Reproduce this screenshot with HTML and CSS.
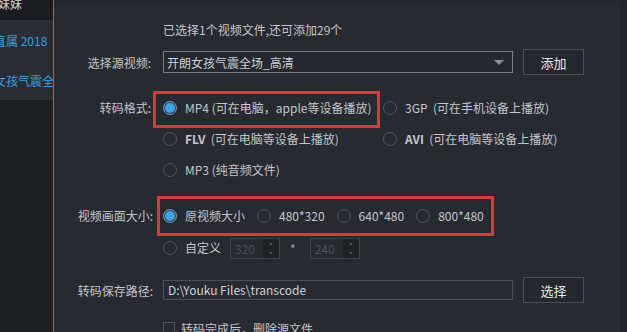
FILE: index.html
```html
<!DOCTYPE html>
<html lang="zh-CN">
  <head>
    <meta charset="UTF-8" />
    <title>视频转码</title>
    <meta name="viewport" content="width=device-width, initial-scale=1.0" />
    <link rel="stylesheet" href="styles.css">
  </head>
  <body>
    <aside class="sidebar">
      <div class="side-head">可爱小妹妹</div>
      <div class="side-item">
        <div class="side-line">官方直属 2018</div>
        <div class="side-line">开朗女孩气震全场_高清</div>
      </div>
    </aside>

    <main class="panel">
      <div class="field notice-row">
        <span class="field-label"></span>
        <span class="notice">已选择1个视频文件,还可添加29个</span>
      </div>

      <div class="field source-row">
        <span class="field-label">选择源视频:</span>
        <div class="select">
          <span>开朗女孩气震全场_高清</span>
          <svg class="select-arrow" width="10" height="5" viewBox="0 0 10 5">
            <path d="M0 0h10L5 5z" fill="#8a8d92" />
          </svg>
        </div>
        <button class="btn">添加</button>
      </div>

      <div class="field format-row">
        <span class="field-label">转码格式:</span>
        <div class="options">
          <label class="option marked"><span class="radio checked"></span>MP4 (可在电脑，apple等设备播放)</label>
          <label class="option"><span class="radio"></span>3GP&nbsp;&nbsp;(可在手机设备上播放)</label>
          <label class="option"><span class="radio"></span><span><b>FLV</b>&nbsp;&nbsp;(可在电脑等设备上播放)</span></label>
          <label class="option"><span class="radio"></span><span><b>AVI</b>&nbsp;&nbsp;(可在电脑等设备上播放)</span></label>
          <label class="option"><span class="radio"></span>MP3 (纯音频文件)</label>
        </div>
      </div>

      <div class="field size-row">
        <span class="field-label">视频画面大小:</span>
        <div class="size-group">
          <div class="size-box">
            <label class="option"><span class="radio checked"></span>原视频大小</label>
            <label class="option"><span class="radio"></span>480*320</label>
            <label class="option"><span class="radio"></span>640*480</label>
            <label class="option"><span class="radio"></span>800*480</label>
          </div>
          <div class="custom-row">
            <label class="option"><span class="radio"></span>自定义</label>
            <div class="spin">
              <span>320</span>
              <svg class="spin-arrows" width="16" height="20" viewBox="0 0 16 20">
                <path d="M6 6h4L8 4z M6 14h4l-2 2z" fill="#5b5e63" />
              </svg>
            </div>
            <span class="times">*</span>
            <div class="spin">
              <span>240</span>
              <svg class="spin-arrows" width="16" height="20" viewBox="0 0 16 20">
                <path d="M6 6h4L8 4z M6 14h4l-2 2z" fill="#5b5e63" />
              </svg>
            </div>
          </div>
        </div>
      </div>

      <div class="field path-row">
        <span class="field-label">转码保存路径:</span>
        <div class="path-input">D:\Youku Files\transcode</div>
        <button class="btn">选择</button>
      </div>

      <div class="field check-row">
        <span class="field-label"></span>
        <span class="checkbox"></span>
        <span class="check-text">转码完成后，删除源文件</span>
      </div>
    </main>

    <div class="edge"></div>
  </body>
</html>
```

FILE: styles.css
```css
body {
  margin: 0;
  height: 332px;
  overflow: hidden;
  display: flex;
  background-color: #272a31;
  font-family: 'Noto Sans CJK SC', 'Noto Sans', sans-serif;
  font-size: 12px;
  color: #c4c6c9;
}

.sidebar {
  width: 53px;
  flex-shrink: 0;
  background-color: #1d1f23;
  border-right: 1px solid #2e8bd3;
  overflow: hidden;
}

.side-head {
  height: 20px;
  line-height: 8px;
  background-color: #1a1c20;
  color: #d4d4d4;
  white-space: nowrap;
  text-indent: -38px;
}

.side-item {
  background-color: #2a2d33;
}

.side-line {
  height: 40px;
  line-height: 42px;
  color: #3b9de0;
  white-space: nowrap;
  text-indent: -30px;
}

.panel {
  flex: 1;
  border-top: 5px solid #22292f;
}

.edge {
  width: 7px;
  flex-shrink: 0;
  background-color: #212429;
}

.field {
  display: flex;
  align-items: center;
}

.field-label {
  width: 99px;
  margin-right: 10px;
  flex-shrink: 0;
  text-align: right;
  white-space: nowrap;
}

.notice-row {
  margin-top: 17px;
  line-height: 16px;
}

.source-row {
  margin-top: 11px;
  height: 26px;
}

.source-row .field-label,
.format-row .field-label {
  width: 97px;
  margin-right: 12px;
}

.select {
  width: 350px;
  height: 22px;
  box-sizing: border-box;
  border: 1px solid #7b7e83;
  background-color: #25282e;
  display: flex;
  align-items: center;
  justify-content: space-between;
  padding: 0 8px 0 3px;
  color: #cfd1d4;
}

.btn {
  width: 61px;
  height: 26px;
  margin-left: 10px;
  border: 1px solid #4b4e54;
  background-color: #24272c;
  color: #e8e8e8;
  font-family: inherit;
  font-size: 13px;
  padding: 0;
}

.format-row {
  margin-top: 17px;
  align-items: flex-start;
}

.format-row .field-label {
  line-height: 31px;
}

.options {
  display: grid;
  grid-template-columns: 220px auto;
  grid-auto-rows: 31px;
  align-items: center;
  justify-items: start;
}

.option {
  display: inline-flex;
  align-items: center;
  gap: 8px;
  line-height: 16px;
  white-space: nowrap;
}

.option b {
  font-weight: 600;
}

.option.marked {
  border: 3px solid #e2363d;
  padding: 6px 5px 9px 7px;
  margin: -9px -8px -12px -10px;
}

.radio {
  width: 14px;
  height: 14px;
  box-sizing: border-box;
  border: 1px solid #4e5359;
  border-radius: 50%;
  flex-shrink: 0;
}

.radio.checked {
  border-color: #7c8896;
  background-color: #3aa5ef;
  box-shadow: inset 0 0 0 1px #2b3746;
}

.size-row {
  margin-top: 11px;
  align-items: flex-start;
}

.size-row .field-label {
  line-height: 40px;
}

.size-box {
  height: 40px;
  box-sizing: border-box;
  border: 3px solid #e2363d;
  padding: 0 7px 0 3px;
  margin-left: -6px;
  display: flex;
  align-items: center;
  gap: 12px;
}

.custom-row {
  height: 24px;
  display: flex;
  align-items: center;
}

.spin {
  width: 50px;
  height: 21px;
  box-sizing: border-box;
  border: 1px solid #3e4147;
  margin-left: 9px;
  display: flex;
  align-items: center;
  justify-content: space-between;
  padding-left: 4px;
  color: #4b4e54;
}

.spin-arrows {
  background-color: #1f2125;
  height: 19px;
}

.times {
  margin: 0 5px 0 10px;
  color: #a0a2a6;
}

.path-row {
  margin-top: 17px;
  height: 26px;
}

.path-input {
  width: 350px;
  height: 20px;
  box-sizing: border-box;
  border: 1px solid #4c4f55;
  line-height: 18px;
  padding-left: 4px;
  color: #cfd1d4;
}

.check-row {
  margin-top: 17px;
  height: 16px;
}

.checkbox {
  width: 12px;
  height: 12px;
  box-sizing: border-box;
  border: 1px solid #4e5359;
}

.check-text {
  margin-left: 6px;
  white-space: nowrap;
}
```
